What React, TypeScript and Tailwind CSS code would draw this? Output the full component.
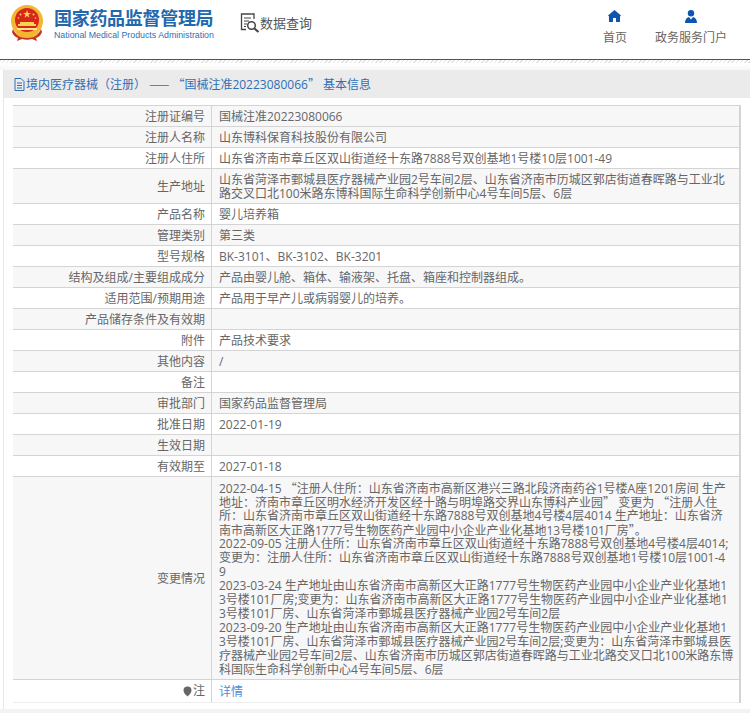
const font = "font-['Open_Sans','Noto_Sans_CJK_SC',sans-serif]";

const changeLines = [
  '2022-04-15 “注册人住所：山东省济南市高新区港兴三路北段济南药谷1号楼A座1201房间 生产',
  '地址：济南市章丘区明水经济开发区经十路与明埠路交界山东博科产业园” 变更为 “注册人住',
  '所：山东省济南市章丘区双山街道经十东路7888号双创基地4号楼4层4014 生产地址：山东省济',
  '南市高新区大正路1777号生物医药产业园中小企业产业化基地13号楼101厂房”。',
  '2022-09-05 注册人住所：山东省济南市章丘区双山街道经十东路7888号双创基地4号楼4层4014;',
  '变更为：注册人住所：山东省济南市章丘区双山街道经十东路7888号双创基地1号楼10层1001-4',
  '9',
  '2023-03-24 生产地址由山东省济南市高新区大正路1777号生物医药产业园中小企业产业化基地1',
  '3号楼101厂房;变更为：山东省济南市高新区大正路1777号生物医药产业园中小企业产业化基地1',
  '3号楼101厂房、山东省菏泽市鄄城县医疗器械产业园2号车间2层',
  '2023-09-20 生产地址由山东省济南市高新区大正路1777号生物医药产业园中小企业产业化基地1',
  '3号楼101厂房、山东省菏泽市鄄城县医疗器械产业园2号车间2层;变更为：山东省菏泽市鄄城县医',
  '疗器械产业园2号车间2层、山东省济南市历城区郭店街道春晖路与工业北路交叉口北100米路东博',
  '科国际生命科学创新中心4号车间5层、6层',
];

const rows: { label: string; lines: string[] }[] = [
  { label: '注册证编号', lines: ['国械注准20223080066'] },
  { label: '注册人名称', lines: ['山东博科保育科技股份有限公司'] },
  { label: '注册人住所', lines: ['山东省济南市章丘区双山街道经十东路7888号双创基地1号楼10层1001-49'] },
  {
    label: '生产地址',
    lines: [
      '山东省菏泽市鄄城县医疗器械产业园2号车间2层、山东省济南市历城区郭店街道春晖路与工业北',
      '路交叉口北100米路东博科国际生命科学创新中心4号车间5层、6层',
    ],
  },
  { label: '产品名称', lines: ['婴儿培养箱'] },
  { label: '管理类别', lines: ['第三类'] },
  { label: '型号规格', lines: ['BK-3101、BK-3102、BK-3201'] },
  { label: '结构及组成/主要组成成分', lines: ['产品由婴儿舱、箱体、输液架、托盘、箱座和控制器组成。'] },
  { label: '适用范围/预期用途', lines: ['产品用于早产儿或病弱婴儿的培养。'] },
  { label: '产品储存条件及有效期', lines: [] },
  { label: '附件', lines: ['产品技术要求'] },
  { label: '其他内容', lines: ['/'] },
  { label: '备注', lines: [] },
  { label: '审批部门', lines: ['国家药品监督管理局'] },
  { label: '批准日期', lines: ['2022-01-19'] },
  { label: '生效日期', lines: [] },
  { label: '有效期至', lines: ['2027-01-18'] },
  { label: '变更情况', lines: changeLines },
];

// curly quotes and dashes are full width in the original, Open Sans would shrink them
function Mixed({ text }: { text: string }) {
  const parts = text.split(/([“”—]+)/);
  return (
    <>
      {parts.map((part, i) =>
        i % 2 === 1 ? (
          <span key={i} className="font-['Noto_Sans_CJK_SC',sans-serif]">
            {part}
          </span>
        ) : (
          part
        ),
      )}
    </>
  );
}

function Emblem() {
  return (
    <svg width="34" height="36" viewBox="0 0 34 36" className="shrink-0">
      <circle cx="17" cy="16" r="16" fill="#f2b632" />
      <circle cx="17" cy="15" r="12" fill="#d9261c" />
      <path d="M17 5l1 3h3l-2.500 1.800 1 3L17 11l-2.500 1.800 1-3L13 8h3z" fill="#f7d54a" />
      <circle cx="10.500" cy="9.500" r="1" fill="#f7d54a" />
      <circle cx="23.500" cy="9.500" r="1" fill="#f7d54a" />
      <circle cx="8.500" cy="13" r="0.800" fill="#f7d54a" />
      <circle cx="25.500" cy="13" r="0.800" fill="#f7d54a" />
      <path d="M8 19h18v2H8zM10 17h14v2H10z" fill="#f7d54a" />
      <path d="M7 23h20v2H7z" fill="#fbe58a" />
      <path d="M3 24c2 5 6 8 14 8s12-3 14-8l1 3c-1 3-3 5-6 6l1 3-5-2c-3 1-7 1-10 0l-5 2 1-3c-3-1-5-3-6-6z" fill="#c9301f" />
      <path d="M6 27c3 3 6 4 11 4s8-1 11-4v2c-3 3-6 4-11 4s-8-1-11-4z" fill="#f2b632" />
    </svg>
  );
}

function SearchDocIcon() {
  return (
    <svg width="20" height="20" viewBox="0 0 20 20" fill="none" stroke="#444" className="shrink-0">
      <path d="M11.500 1H1.500v15.500H6" strokeWidth="1.300" />
      <path d="M11.500 1H14v5" strokeWidth="1.300" />
      <path d="M4 5h7M4 8h5M4 11h3M4 13.500h2" strokeWidth="1.200" />
      <circle cx="11.500" cy="12.500" r="3.800" strokeWidth="1.500" />
      <path d="M14.500 15.500l4 3.500" strokeWidth="2" />
    </svg>
  );
}

function HomeIcon() {
  return (
    <svg width="13" height="12" viewBox="0 0 13 12" fill="#0f55b0" className="shrink-0">
      <path d="M6.500 0L13 5.500 12 6.500V12H8V8H5v4H1V6.500L0 5.500z" />
    </svg>
  );
}

function PersonIcon() {
  return (
    <svg width="12" height="13" viewBox="0 0 12 13" fill="#0f55b0" className="shrink-0">
      <circle cx="6" cy="3.200" r="3.200" />
      <path d="M0 13c0-3.500 1.500-5.500 4-6l2 2.500L8 7c2.500.5 4 2.500 4 6z" />
    </svg>
  );
}

function Header() {
  return (
    <header className="flex h-[59px] items-start">
      <div className="ml-[10px] mt-[5px]">
        <Emblem />
      </div>
      <div className="ml-[10px] mt-[6px] w-[165px]">
        <div className="text-[18px] font-bold leading-[24px] tracking-[-0.3px] whitespace-nowrap text-[#2368ad]">
          国家药品监督管理局
        </div>
        <div className="mt-[-1px] font-['Liberation_Sans',sans-serif] text-[8.8px] leading-[12px] whitespace-nowrap text-[#2a72b5]">
          National Medical Products Administration
        </div>
      </div>
      <div className="ml-[21px] mt-[13px] flex items-center">
        <SearchDocIcon />
        <span className="text-[13px] leading-[18px] text-[#555]">数据查询</span>
      </div>
      <nav className="ml-auto mr-[23px] mt-[10px] flex gap-[18px] text-[12px] leading-[16px] text-[#666]">
        <a className="flex h-[36px] w-[44px] flex-col items-center justify-between">
          <HomeIcon />
          <span>首页</span>
        </a>
        <a className="flex h-[36px] flex-col items-center justify-between">
          <PersonIcon />
          <span>政务服务门户</span>
        </a>
      </nav>
    </header>
  );
}

function Row({ label, lines, index }: { label: string; lines: string[]; index: number }) {
  const shaded = index === 0 || index % 2 === 1 ? 'bg-[#f7f7f8]' : 'bg-white';
  return (
    <tr className={shaded}>
      <td className="border-b border-r border-[#d4d4d4] pb-[2px] pr-[6px] pt-[4px] text-right align-middle">{label}</td>
      <td className="border-b border-[#d4d4d4] pb-[2px] pl-[7px] pt-[4px] align-middle whitespace-nowrap">
        {lines.length === 0 && <span>&nbsp;</span>}
        {lines.map((line, i) => (
          <div key={i} className="h-[14px]">
            <Mixed text={line} />
          </div>
        ))}
      </td>
    </tr>
  );
}

export default function App() {
  return (
    <div className={`h-[713px] w-[750px] overflow-hidden bg-white ${font}`}>
      <Header />
      <div className="h-[4px] border-t border-[#1a5f9e] bg-[repeating-linear-gradient(135deg,#e2e2e2_0,#e2e2e2_1px,#ffffff_1px,#ffffff_3px)]" />
      <div className="h-[7px] bg-gradient-to-b from-white to-[#f7f7f7]" />
      <main className="ml-[3px] h-[639px] border-l border-[#e6e6e6] bg-white">
        <h2 className="flex h-[28px] items-center gap-[1px] bg-[#ebebeb] pl-[10px] text-[12px] font-normal whitespace-nowrap text-[#2f6fb5]">
          <svg width="11" height="13" viewBox="0 0 11 13" fill="none" stroke="#2f6fb5" className="shrink-0">
            <path d="M1 .500h6l3 3v9H1z" />
            <path d="M3 5h5M3 7.500h5M3 10h5" />
          </svg>
          <span>
            <Mixed text="境内医疗器械（注册） —— “国械注准20223080066” 基本信息" />
          </span>
        </h2>
        <div className="ml-[9px] mt-[7px] w-[728px] border-r-2 border-t border-r-[#d4d4d4] border-t-[#d4d4d4]">
          <table className="w-full table-fixed border-separate border-spacing-0 text-[12px] leading-[14px] text-[#666]">
            <colgroup>
              <col className="w-[199px]" />
              <col />
            </colgroup>
            <tbody>
              {rows.map((row, i) => (
                <Row key={row.label} label={row.label} lines={row.lines} index={i} />
              ))}
              <tr className="bg-white">
                <td className="h-[23px] border-b border-r border-b-[#eeeeee] border-r-[#d4d4d4] pr-[6px] pt-[2px] text-right align-middle">
                  <span className="inline-flex items-center gap-[1px]">
                    <svg width="9" height="11" viewBox="0 0 9 11">
                      <path d="M4.500 0.500a4 4 0 0 1 4 4c0 2.500-2.500 4.500-4 6-1.500-1.500-4-3.500-4-6a4 4 0 0 1 4-4z" fill="#666" />
                    </svg>
                    注
                  </span>
                </td>
                <td className="h-[23px] border-b border-[#eeeeee] pl-[7px] pt-[2px] align-middle">
                  <a className="text-[#4a90d9]">详情</a>
                </td>
              </tr>
            </tbody>
          </table>
        </div>
      </main>
      <div className="h-[4px] bg-[#f3f3f3]" />
    </div>
  );
}
